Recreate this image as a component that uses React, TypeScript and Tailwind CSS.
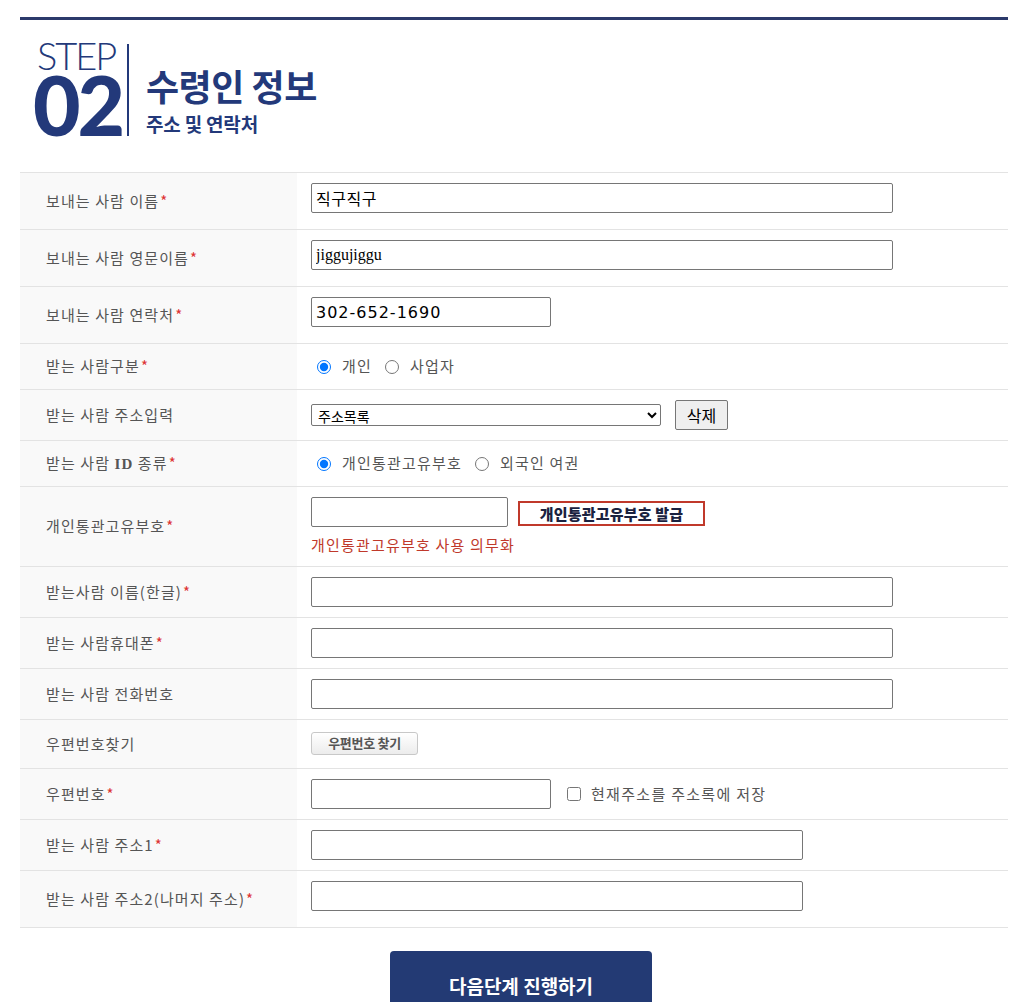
import React, { useState } from 'react';

const KR = { fontFamily: '"Noto Sans CJK KR", "Noto Sans", sans-serif' };

const Label: React.FC<{ text: React.ReactNode; req?: boolean }> = ({ text, req }) => (
  <div className="w-[277px] shrink-0 self-stretch bg-[#f9f9f9] pl-[26px] flex items-center text-[15px] text-[#555] tracking-[1.1px]">
    <span>{text}</span>
    {req && <span className="text-[#d33] ml-[1px]">*</span>}
  </div>
);

const Row: React.FC<{ h: string; label: React.ReactNode; req?: boolean; top?: boolean; children?: React.ReactNode }> = ({ h, label, req, top, children }) => (
  <div className={`flex border-b border-[#e3e3e3] ${h}`}>
    <Label text={label} req={req} />
    <div className={top ? 'flex-1 pl-[14px] pt-[10px] flex items-start' : 'flex-1 pl-[14px] flex items-center'}>{children}</div>
  </div>
);

const inputCls = 'h-[30px] border border-[#767676] rounded-[2px] px-[4px] bg-white outline-none';
const radioCls = 'w-[14px] h-[14px] ml-[6px] mr-[11px]';

export default function App() {
  const [kind, setKind] = useState('personal');
  const [idType, setIdType] = useState('pccc');

  return (
    <div className="bg-white min-h-[1002px] pt-[17px]" style={KR}>
      <div className="w-[988px] ml-[20px]">
        <div className="border-t-[3px] border-[#2b3a6b]" />

        {/* step header */}
        <div className="h-[152px] flex items-start pt-[19px] pl-[13px]">
          <div className="flex flex-col text-[#23397a] w-[92px]">
            <div className="text-[38px] leading-[32px] font-light tracking-[-2px] pl-[4px]" style={{ fontFamily: 'Lato, sans-serif' }}>STEP</div>
            <div className="text-[82px] leading-[62px] font-black tracking-[-3px] mt-[2px]" style={{ fontFamily: 'Lato, sans-serif' }}>02</div>
          </div>
          <div className="w-[2px] h-[92px] bg-[#23397a] mt-[5px] ml-[2px]" />
          <div className="pl-[17px] pt-[26px] text-[#23397a]">
            <div className="text-[36px] leading-[40px] font-bold tracking-[-0.5px]">수령인 정보</div>
            <div className="text-[19px] leading-[24px] font-bold mt-[7px] tracking-[-0.2px]">주소 및 연락처</div>
          </div>
        </div>

        {/* form table */}
        <div className="border-t border-[#e3e3e3]">
          <Row h="h-[57px]" label="보내는 사람 이름" req top>
            <input className={`${inputCls} w-[582px] text-[16px] text-black tracking-[0.5px]`} defaultValue="직구직구" />
          </Row>
          <Row h="h-[57px]" label="보내는 사람 영문이름" req top>
            <input className={`${inputCls} w-[582px] text-[16px] text-black`} style={{ fontFamily: '"Liberation Serif", serif' }} defaultValue="jiggujiggu" />
          </Row>
          <Row h="h-[57px]" label="보내는 사람 연락처" req top>
            <input className={`${inputCls} w-[240px] text-[16px] text-black tracking-[1px]`} style={{ fontFamily: '"DejaVu Sans", sans-serif' }} defaultValue="302-652-1690" />
          </Row>
          <Row h="h-[46px]" label="받는 사람구분" req>
            <label className="flex items-center text-[15px] text-[#555] tracking-[1.2px]">
              <input type="radio" name="kind" checked={kind === 'personal'} onChange={() => setKind('personal')} className={radioCls} />
              개인
            </label>
            <label className="flex items-center text-[15px] text-[#555] tracking-[1.2px] ml-[7px]">
              <input type="radio" name="kind" checked={kind === 'biz'} onChange={() => setKind('biz')} className={radioCls} />
              사업자
            </label>
          </Row>
          <Row h="h-[51px]" label="받는 사람 주소입력">
            <select className="w-[350px] h-[22px] border border-[#767676] rounded-[2px] text-[14px] text-black bg-white pl-[2px]">
              <option>주소목록</option>
            </select>
            <button className="ml-[14px] h-[30px] w-[53px] border border-[#767676] rounded-[2px] bg-[#efefef] text-[16px] text-black">삭제</button>
          </Row>
          <Row h="h-[46px]" label={<>받는 사람 <span className="font-bold" style={{ fontFamily: '"Liberation Serif", serif' }}>ID</span> 종류</>} req>
            <label className="flex items-center text-[15px] text-[#555] tracking-[1.2px]">
              <input type="radio" name="idt" checked={idType === 'pccc'} onChange={() => setIdType('pccc')} className={radioCls} />
              개인통관고유부호
            </label>
            <label className="flex items-center text-[15px] text-[#555] tracking-[1.2px] ml-[7px]">
              <input type="radio" name="idt" checked={idType === 'passport'} onChange={() => setIdType('passport')} className={radioCls} />
              외국인 여권
            </label>
          </Row>
          <Row h="h-[80px]" label="개인통관고유부호" req>
            <div className="flex flex-col">
              <div className="flex items-center">
                <input className={`${inputCls} w-[197px]`} />
                <button className="ml-[10px] mt-[4px] w-[187px] h-[25px] border-2 border-[#c0392b] bg-white text-[15px] font-black text-[#1a2240] tracking-[0.2px]">개인통관고유부호 발급</button>
              </div>
              <div className="text-[15px] text-[#c0392b] mt-[7px] tracking-[1.2px]">개인통관고유부호 사용 의무화</div>
            </div>
          </Row>
          <Row h="h-[51px]" label="받는사람 이름(한글)" req>
            <input className={`${inputCls} w-[582px]`} />
          </Row>
          <Row h="h-[51px]" label="받는 사람휴대폰" req>
            <input className={`${inputCls} w-[582px]`} />
          </Row>
          <Row h="h-[51px]" label="받는 사람 전화번호">
            <input className={`${inputCls} w-[582px]`} />
          </Row>
          <Row h="h-[49px]" label="우편번호찾기">
            <button className="w-[107px] h-[23px] border border-[#c8c8c8] rounded-[3px] bg-gradient-to-b from-white to-[#ececec] text-[13px] font-bold text-[#555] tracking-[-0.3px] mb-[2px]">우편번호 찾기</button>
          </Row>
          <Row h="h-[51px]" label="우편번호" req>
            <input className={`${inputCls} w-[240px]`} />
            <label className="flex items-center ml-[16px] text-[15px] text-[#555] tracking-[1.3px]">
              <input type="checkbox" className="w-[14px] h-[14px] mr-[10px]" />
              현재주소를 주소록에 저장
            </label>
          </Row>
          <Row h="h-[51px]" label="받는 사람 주소1" req>
            <input className={`${inputCls} w-[492px]`} />
          </Row>
          <Row h="h-[57px]" label="받는 사람 주소2(나머지 주소)" req top>
            <input className={`${inputCls} w-[492px]`} />
          </Row>
        </div>

        <div className="flex justify-center pt-[23px]">
          <button className="w-[262px] h-[70px] bg-[#233a74] rounded-[4px] text-white text-[19px] font-bold tracking-[0px] ml-[14px]">다음단계 진행하기</button>
        </div>
      </div>
    </div>
  );
}
